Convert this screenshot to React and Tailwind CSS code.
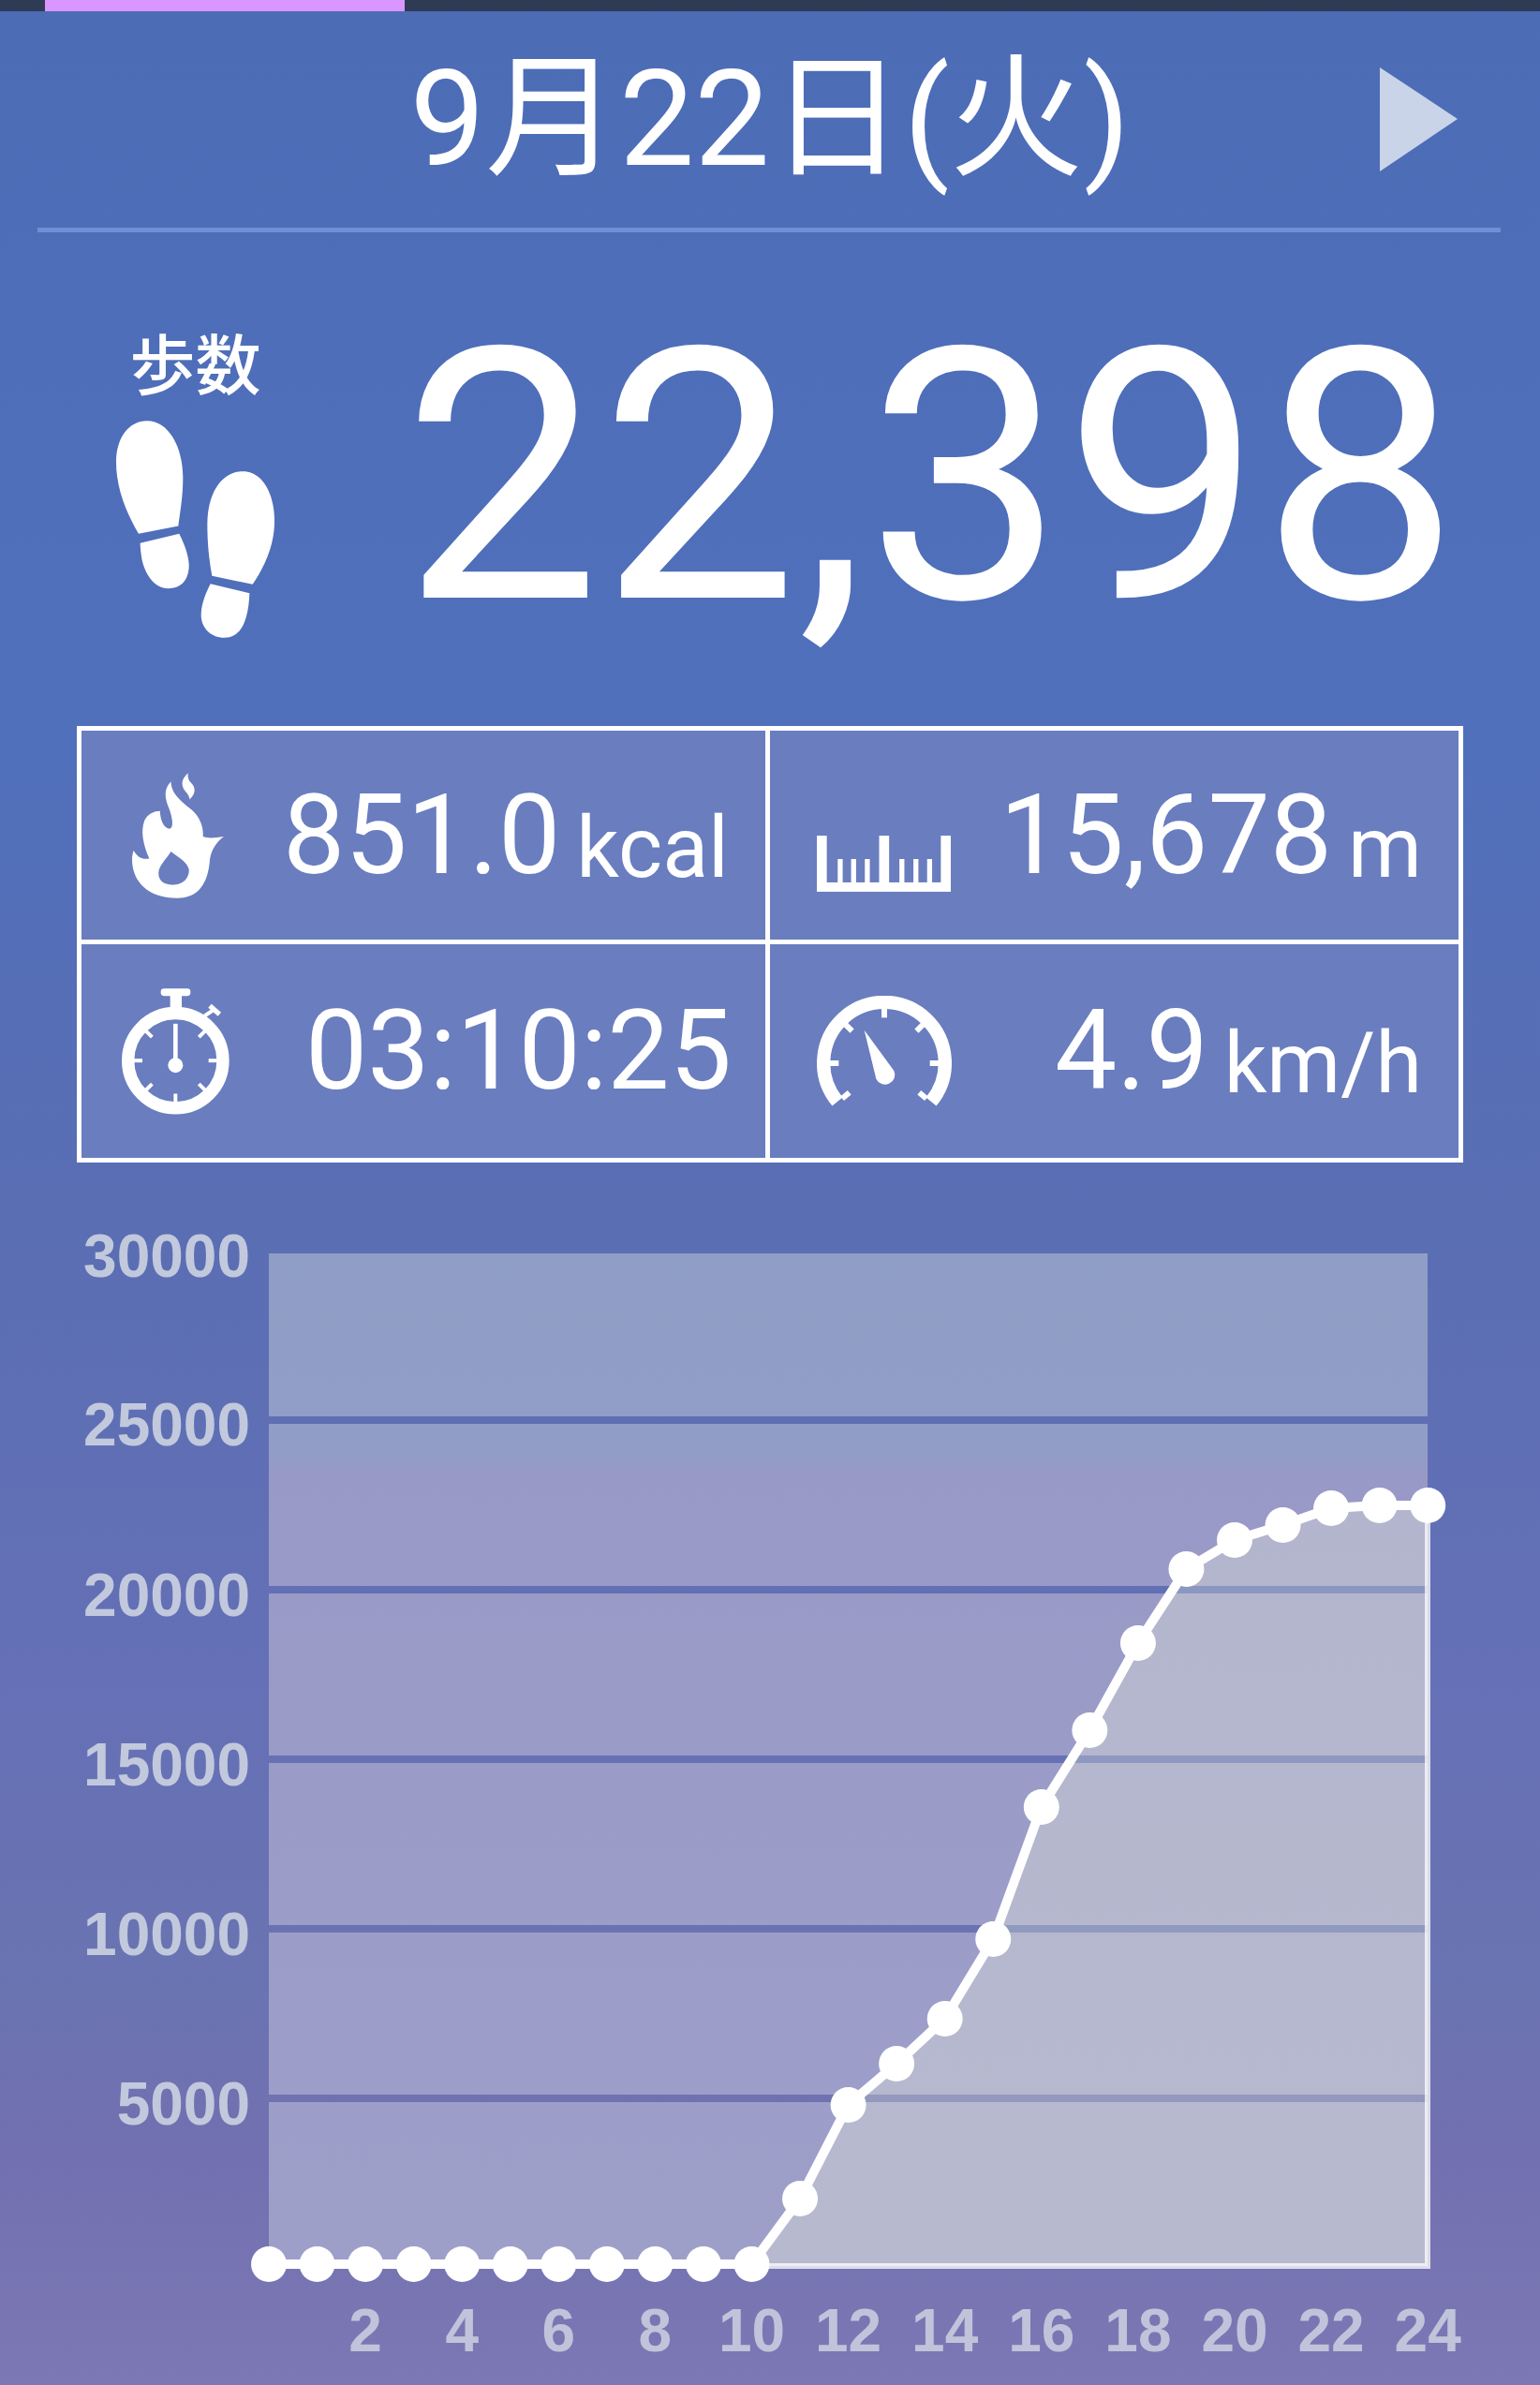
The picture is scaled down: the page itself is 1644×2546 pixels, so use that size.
import React from 'react';

const FONT = "font-['Roboto','Noto_Sans_CJK_JP',sans-serif]";

// y position of the dot for each hour, read off the chart
const POINTS = [
  2417, 2417, 2417, 2417, 2417, 2417, 2417, 2417, 2417, 2417, 2417,
  2347, 2247, 2203, 2155, 2070, 1929, 1847, 1754, 1675, 1644, 1628, 1610, 1607, 1607,
];
const hourX = (h) => 287 + h * 51.55;

// Plot background is split in bands, the gaps let the page colour through as grid lines
const BANDS = [
  [1338, 1512], [1520, 1693], [1701, 1874], [1882, 2055], [2063, 2236], [2244, 2419],
];
const Y_LABELS = [
  [30000, 1363], [25000, 1543], [20000, 1725], [15000, 1906], [10000, 2087], [5000, 2268],
];
const X_LABELS = [2, 4, 6, 8, 10, 12, 14, 16, 18, 20, 22, 24];

function FeetIcon() {
  return (
    <svg width="169" height="232" viewBox="133 388 507 695" fill="#fff">
      <path d="M205 750C170 690 133 610 133 520C133 440 175 388 232 388C300 388 347 470 347 570C347 630 338 680 332 725Z" />
      <path d="M210 780L335 750C355 790 368 830 366 860C362 905 335 925 300 925C255 925 225 880 215 830C212 810 210 795 210 780Z" />
      <path d="M440 885C430 830 425 780 425 720C425 620 470 550 540 550C600 550 640 620 640 710C640 790 605 860 570 912Z" />
      <path d="M435 910L560 940C558 990 548 1083 480 1083C435 1083 405 1050 405 1010C405 975 420 940 435 910Z" />
    </svg>
  );
}

function FlameIcon() {
  return (
    <svg width="98" height="134" viewBox="65 33 295 402" fill="#fff">
      <path
        fillRule="evenodd"
        d="M210 435C120 435 65 385 65 310C65 300 67 290 70 282C80 300 95 312 120 308C100 260 92 220 105 185C115 165 135 155 155 155C155 180 165 210 185 212C200 210 195 180 185 150C170 115 165 85 190 60C190 100 225 125 255 150C285 175 295 210 293 237C315 245 335 240 360 237C335 255 320 280 315 310C310 385 280 435 210 435ZM190 285C175 310 150 330 150 355C150 385 175 392 200 392C230 392 248 370 248 345C245 320 215 305 190 285Z"
      />
      <path d="M245 33C225 50 220 70 235 90C245 100 250 110 250 118C270 100 270 80 255 65C245 55 243 45 245 33Z" />
    </svg>
  );
}

function StopwatchIcon() {
  const ticks = [45, 90, 135, 180, 225, 270, 315];
  return (
    <svg width="115" height="135" viewBox="30 22 345 404" fill="#fff">
      <rect x="155" y="22" width="95" height="24" rx="10" />
      <path d="M185 44H222V90H185Z" />
      <path d="M295 110L325 90" stroke="#fff" strokeWidth="12" />
      <path d="M312 78L343 105" stroke="#fff" strokeWidth="16" />
      <circle cx="202" cy="253" r="152" fill="none" stroke="#fff" strokeWidth="40" />
      {ticks.map((a) => (
        <rect key={a} x="196" y="115" width="12" height="32" transform={`rotate(${a} 202 253)`} />
      ))}
      <rect x="195" y="135" width="14" height="130" />
      <circle cx="202" cy="268" r="24" />
    </svg>
  );
}

function RulerIcon() {
  const small = [105, 148, 192, 303, 348, 392];
  return (
    <svg width="143" height="60" viewBox="38 33 430 180" fill="#fff">
      <rect x="38" y="183" width="430" height="30" />
      <rect x="38" y="33" width="32" height="160" />
      <rect x="238" y="33" width="32" height="160" />
      <rect x="436" y="33" width="32" height="160" />
      {small.map((x) => (
        <rect key={x} x={x} y="108" width="16" height="80" />
      ))}
    </svg>
  );
}

function GaugeIcon() {
  const ticks = [-130, -90, -45, 0, 45, 90, 130];
  return (
    <svg width="144" height="118" viewBox="36 30 432 354" fill="#fff">
      <path d="M102 369A194.5 194.5 0 1 1 402 369" fill="none" stroke="#fff" strokeWidth="43" />
      {ticks.map((a) => (
        <rect key={a} x="243" y="70" width="18" height="30" transform={`rotate(${a} 252 246)`} />
      ))}
      <path d="M188 140L283 270A31 31 0 1 1 226 296Z" />
    </svg>
  );
}

function StatCell({ icon, value, unit, iconClass, cellClass }) {
  return (
    <div className={`flex items-center justify-between bg-[#697dbf] ${cellClass}`}>
      <div className={iconClass}>{icon}</div>
      <div className="flex items-baseline text-white">
        <span className="text-[118px] leading-none">{value}</span>
        {unit && <span className="ml-[17px] translate-y-[4px] text-[90px] leading-none">{unit}</span>}
      </div>
    </div>
  );
}

function StepChart() {
  const line = POINTS.map((y, h) => `${hourX(h)},${y}`).join(' ');
  return (
    <svg className="mt-[59px] block font-['Liberation_Sans',sans-serif] font-bold" width="1644" height="1246" viewBox="0 1300 1644 1246">
      <defs>
        <linearGradient id="plotFill" gradientUnits="userSpaceOnUse" x1="0" y1="1338" x2="0" y2="2419">
          <stop offset="0" stopColor="#8f9ec6" />
          <stop offset="0.2" stopColor="#919dc6" />
          <stop offset="0.22" stopColor="#9899c6" />
          <stop offset="1" stopColor="#9e9fc9" />
        </linearGradient>
      </defs>
      {BANDS.map(([top, bottom]) => (
        <rect key={top} x="287" y={top} width="1237" height={bottom - top} fill="url(#plotFill)" />
      ))}
      <polygon points={`${line} 1524,2419 802,2419`} fill="#f8ffdd" fillOpacity="0.28" />
      <polyline points={`802,2419 1524,2419 1524,1607`} fill="none" stroke="#fff" strokeOpacity="0.75" strokeWidth="6" />
      <polyline points={line} fill="none" stroke="#fff" strokeWidth="10" />
      {POINTS.map((y, h) => (
        <circle key={h} cx={hourX(h)} cy={y} r="19" fill="#fff" />
      ))}
      {Y_LABELS.map(([v, y]) => (
        <text key={v} x="267" y={y} textAnchor="end" fontSize="64" fill="#c2c9dd">{v}</text>
      ))}
      {X_LABELS.map((h) => (
        <text key={h} x={hourX(h)} y="2510" textAnchor="middle" fontSize="64" fill="#bfc4da">{h}</text>
      ))}
    </svg>
  );
}

export default function App() {
  return (
    <div className={`h-[2546px] w-[1644px] overflow-hidden bg-[linear-gradient(180deg,#4c6cb6_0px,#5070bc_760px,#5a6eb3_1300px,#6570b6_1800px,#6a74b2_2100px,#7270b0_2300px,#7c78b5_2546px)] ${FONT}`}>
      {/* status strip */}
      <div className="h-[12px] bg-[#2f3a55] pl-[48px]">
        <div className="h-full w-[384px] bg-[#d996ff]" />
      </div>

      {/* date header */}
      <div className="grid h-[231px] grid-cols-[1fr_auto_1fr] items-center">
        <div />
        <div className="text-[143px] leading-none text-white">9月22日(火)</div>
        <div className="flex justify-end pr-[88px]">
          <svg width="83" height="111" viewBox="0 0 83 111" fill="#c9d4e8">
            <path d="M0 0L83 55L0 111Z" />
          </svg>
        </div>
      </div>
      <div className="ml-[40px] h-[5px] w-[1562px] bg-[#6f8fd6]" />

      {/* step count */}
      <div className="flex h-[527px] items-start">
        <div className="ml-[124px] mt-[100px] flex w-[169px] flex-col items-center">
          <div className="text-[70px] font-medium leading-[88px] text-white">歩数</div>
          <div className="mt-[13px]"><FeetIcon /></div>
        </div>
        <div className="ml-[137px] mt-[75px] text-[375px] leading-none text-white">22,398</div>
      </div>

      {/* stats table */}
      <div className="ml-[82px] grid h-[466px] w-[1480px] grid-cols-[730px_1fr] grid-rows-[223px_1fr] gap-[5px] bg-white p-[5px]">
        <StatCell icon={<FlameIcon />} iconClass="ml-[54px]" cellClass="pr-[39px]" value="851.0" unit="kcal" />
        <StatCell icon={<RulerIcon />} iconClass="ml-[50px] mt-[60px]" cellClass="pr-[39px]" value="15,678" unit="m" />
        <StatCell icon={<StopwatchIcon />} iconClass="ml-[43px]" cellClass="pr-[36px]" value="03:10:25" />
        <StatCell icon={<GaugeIcon />} iconClass="ml-[50px]" cellClass="pr-[39px]" value="4.9" unit="km/h" />
      </div>

      <StepChart />
    </div>
  );
}
